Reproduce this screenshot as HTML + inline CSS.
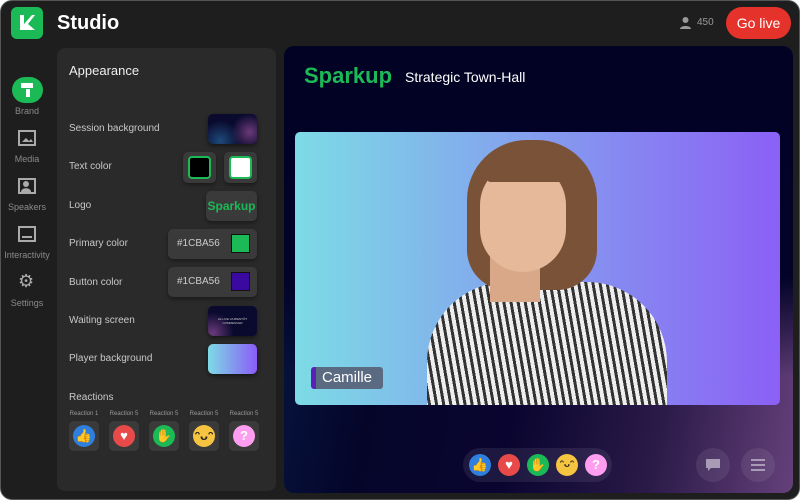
<!DOCTYPE html>
<html><head><meta charset="utf-8"><style>
*{margin:0;padding:0;box-sizing:border-box}
body{width:800px;height:500px;background:#fff;font-family:"Liberation Sans",sans-serif;overflow:hidden;position:relative}
.win{position:absolute;left:0;top:0;width:800px;height:500px;background:#1e1e1e;border-radius:12px;border:1px solid #555}
.a{position:absolute}
.lbl{position:absolute;left:68px;color:#c8c8c8;font-size:10px}
.sw{position:absolute;border-radius:5px;box-shadow:0 2px 4px rgba(0,0,0,.5)}
.box{position:absolute;background:#3a3a3a;border-radius:5px;box-shadow:0 2px 4px rgba(0,0,0,.4)}
.nav{position:absolute;left:0;width:52px;text-align:center;color:#8a8a8a;font-size:9px}
.rc{position:absolute;top:420px;width:30px;height:30px;background:#3a3a3a;border-radius:5px}
.rc i{position:absolute;left:4px;top:4px;width:22px;height:22px;border-radius:50%;color:#fff;font-style:normal;font-weight:bold;font-size:13px;text-align:center;line-height:22px}
.rl{position:absolute;top:410px;font-size:6px;color:#999;width:40px;text-align:center}
.em{position:absolute;top:453px;width:22px;height:22px;border-radius:50%;color:#fff;font-weight:bold;font-size:13px;text-align:center;line-height:22px}
</style></head><body><div class="win">
<div class="a" style="left:10px;top:6px;width:32px;height:32px;background:#1cba56;border-radius:6px"><svg width="32" height="32"><path d="M9 8h4v9l8-9h3l-7 9 7 6H9z" fill="#fff"/></svg></div>
<div class="a" style="left:56px;top:10px;color:#fff;font-size:20px;font-weight:bold;line-height:24px">Studio</div>
<svg class="a" style="left:678px;top:15px" width="13" height="13"><circle cx="6.5" cy="4" r="3" fill="#999"/><path d="M1 13c0-4 11-4 11 0z" fill="#999"/></svg>
<div class="a" style="left:696px;top:16px;color:#999;font-size:10px">450</div>
<div class="a" style="left:725px;top:6px;width:65px;height:32px;background:#e5322a;border-radius:16px;color:#fff;font-size:14px;text-align:center;line-height:32px">Go live</div>

<div class="a" style="left:11px;top:76px;width:31px;height:26px;background:#1cba56;border-radius:13px"><svg width="31" height="26"><rect x="9" y="6" width="12" height="5" fill="#fff"/><rect x="14" y="12" width="4" height="8" fill="#fff"/></svg></div>
<div class="nav" style="top:105px">Brand</div>
<svg class="a" style="left:17px;top:129px" width="18" height="16"><rect x="1" y="1" width="16" height="14" fill="none" stroke="#aaa" stroke-width="2"/><path d="M4 12l4-4 3 3 2-2 2 3z" fill="#aaa"/></svg>
<div class="nav" style="top:153px">Media</div>
<svg class="a" style="left:17px;top:177px" width="18" height="16"><rect x="1" y="1" width="16" height="14" fill="none" stroke="#aaa" stroke-width="2"/><circle cx="8" cy="6" r="3" fill="#aaa"/><path d="M3 14c0-5 10-5 10 0z" fill="#aaa"/></svg>
<div class="nav" style="top:201px">Speakers</div>
<svg class="a" style="left:17px;top:225px" width="18" height="16"><rect x="1" y="1" width="16" height="14" fill="none" stroke="#aaa" stroke-width="2"/><rect x="4" y="10" width="10" height="2" fill="#aaa"/></svg>
<div class="nav" style="top:249px">Interactivity</div>
<div class="a" style="left:17px;top:271px;color:#aaa;font-size:18px;line-height:18px">⚙</div>
<div class="nav" style="top:297px">Settings</div>

<div class="a" style="left:56px;top:47px;width:219px;height:443px;background:#2a2a2a;border-radius:8px"></div>
<div class="a" style="left:68px;top:62px;color:#eee;font-size:13px">Appearance</div>
<div class="lbl" style="top:122px">Session background</div>
<div class="sw" style="left:207px;top:113px;width:49px;height:30px;background:radial-gradient(circle at 85% 60%,#6a3a7a,transparent 40%),radial-gradient(circle at 25% 90%,#1e4a7a,transparent 45%),#0a0a2e"></div>
<div class="lbl" style="top:160px">Text color</div>
<div class="box" style="left:182px;top:151px;width:33px;height:31px"><div class="a" style="left:5px;top:4px;width:23px;height:23px;background:#000;border:2px solid #1cba56;border-radius:4px"></div></div>
<div class="box" style="left:223px;top:151px;width:33px;height:31px"><div class="a" style="left:5px;top:4px;width:23px;height:23px;background:#fff;border:2px solid #1cba56;border-radius:4px"></div></div>
<div class="lbl" style="top:199px">Logo</div>
<div class="box" style="left:205px;top:190px;width:51px;height:30px;color:#1cba56;font-size:12px;font-weight:bold;text-align:center;line-height:30px">Sparkup</div>
<div class="lbl" style="top:237px">Primary color</div>
<div class="box" style="left:167px;top:228px;width:89px;height:30px;color:#ccc;font-size:10px;line-height:30px;padding-left:9px">#1CBA56<div class="a" style="left:63px;top:5px;width:19px;height:19px;background:#1cba56;border:1px solid #111"></div></div>
<div class="lbl" style="top:276px">Button color</div>
<div class="box" style="left:167px;top:266px;width:89px;height:30px;color:#ccc;font-size:10px;line-height:30px;padding-left:9px">#1CBA56<div class="a" style="left:63px;top:5px;width:19px;height:19px;background:#3a0aa0;border:1px solid #111"></div></div>
<div class="lbl" style="top:314px">Waiting screen</div>
<div class="sw" style="left:207px;top:305px;width:49px;height:30px;background:radial-gradient(circle at 10% 90%,#6a3a7a,transparent 40%),#0a0a2e;color:#ccc;font-size:3px;text-align:center;padding-top:11px">LE LIVE VA BIENTÔT<br>COMMENCER</div>
<div class="lbl" style="top:352px">Player background</div>
<div class="sw" style="left:207px;top:343px;width:49px;height:30px;background:linear-gradient(90deg,#7ddbe6,#8b5cf6)"></div>
<div class="lbl" style="top:391px">Reactions</div>
<div class="rl" style="left:63px">Reaction 1</div><div class="rl" style="left:103px">Reaction 5</div><div class="rl" style="left:143px">Reaction 5</div><div class="rl" style="left:183px">Reaction 5</div><div class="rl" style="left:223px">Reaction 5</div>
<div class="rc" style="left:68px"><i style="background:#2f7fde">👍</i></div>
<div class="rc" style="left:108px"><i style="background:#e84a4a">♥</i></div>
<div class="rc" style="left:148px"><i style="background:#1cba56">✋</i></div>
<div class="rc" style="left:188px"><i style="background:#f5c542;color:#222">ᵔᴗᵔ</i></div>
<div class="rc" style="left:228px"><i style="background:#ff9ef0">?</i></div>

<div class="a" style="left:283px;top:45px;width:509px;height:447px;border-radius:10px;overflow:hidden;background:linear-gradient(100deg,#061a45 0%,#05052a 25%,#0a0530 50%,#2a1a48 75%,#65407a 100%)">
<div class="a" style="left:0;top:0;width:509px;height:330px;background:linear-gradient(180deg,#020224 0%,#030328 70%,rgba(3,3,40,0) 100%)"></div>
<div class="a" style="left:20px;top:17px;color:#1cba56;font-size:22px;font-weight:bold">Sparkup</div>
<div class="a" style="left:121px;top:23px;color:#fff;font-size:14px">Strategic Town-Hall</div>
<div class="a" style="left:11px;top:86px;width:485px;height:273px;border-radius:5px;overflow:hidden;background:linear-gradient(90deg,#7ddbe6,#8b60f6)">
<div class="a" style="left:132px;top:150px;width:240px;height:140px;border-radius:80px 80px 0 0;background:repeating-linear-gradient(80deg,#eee 0 4px,#333 4px 7px)"></div>
<div class="a" style="left:172px;top:8px;width:130px;height:150px;border-radius:60px 60px 40px 40px;background:#7a5238"></div>
<div class="a" style="left:195px;top:120px;width:50px;height:50px;background:#d9a888"></div>
<div class="a" style="left:185px;top:30px;width:86px;height:110px;border-radius:45px;background:#e6b99a"></div>
<div class="a" style="left:192px;top:20px;width:75px;height:30px;border-radius:40px 40px 5px 5px;background:#7a5238"></div>
</div>
<div class="a" style="left:27px;top:321px;width:72px;height:22px;background:#5a6a80;border-radius:3px;border-left:5px solid #5b21b6;color:#fff;font-size:15px;line-height:22px;padding-left:6px">Camille</div>
<div class="a" style="left:179px;top:402px;width:149px;height:34px;background:rgba(255,255,255,.08);border-radius:17px"></div>
<div class="a" style="left:412px;top:402px;width:34px;height:34px;background:rgba(255,255,255,.08);border-radius:50%"><svg width="34" height="34"><path d="M10 11h14v9h-9l-3 3v-3h-2z" fill="#a99ab5"/></svg></div>
<div class="a" style="left:457px;top:402px;width:34px;height:34px;background:rgba(255,255,255,.08);border-radius:50%"><svg width="34" height="34"><path d="M10 12h14M10 17h14M10 22h14" stroke="#a99ab5" stroke-width="2"/></svg></div>
</div>
<div class="em" style="left:468px;background:#2f7fde">👍</div>
<div class="em" style="left:497px;background:#e84a4a">♥</div>
<div class="em" style="left:526px;background:#1cba56">✋</div>
<div class="em" style="left:555px;background:#f5c542;color:#222;font-size:10px">ᵔᴗᵔ</div>
<div class="em" style="left:584px;background:#ff9ef0">?</div>
</div></body></html>
